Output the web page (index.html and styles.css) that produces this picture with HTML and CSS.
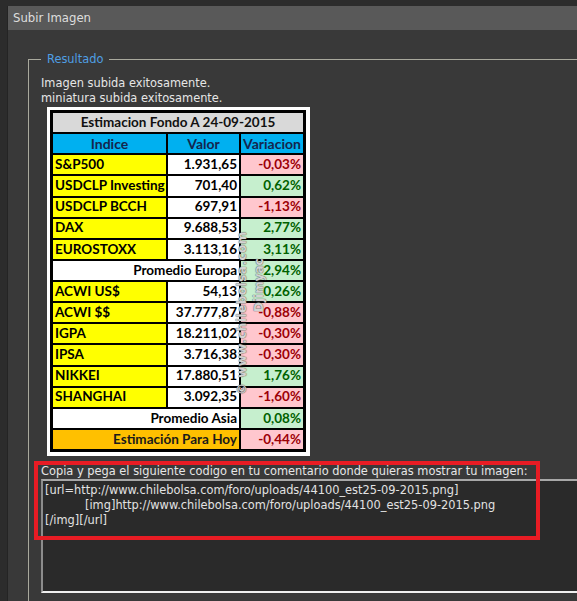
FILE: index.html
```html
<!DOCTYPE html>
<html lang="es">
<head>
<meta charset="utf-8">
<title>Subir Imagen</title>
<link rel="stylesheet" href="styles.css">
</head>
<body>
<div class="page">
  <div class="dialog">
    <div class="titlebar">Subir Imagen</div>
    <div class="dialog-body">
      <fieldset class="result">
        <legend>Resultado</legend>
        <div class="messages">
          <div>Imagen subida exitosamente.</div>
          <div>miniatura subida exitosamente.</div>
        </div>
        <div class="shot">
          <div class="sheet">
            <div class="c title span3">Estimacion Fondo A 24-09-2015</div>
            <div class="c head">Indice</div>
            <div class="c head">Valor</div>
            <div class="c head">Variacion</div>

            <div class="c name">S&amp;P500</div><div class="c val">1.931,65</div><div class="c neg">-0,03%</div>
            <div class="c name">USDCLP Investing</div><div class="c val">701,40</div><div class="c pos">0,62%</div>
            <div class="c name">USDCLP BCCH</div><div class="c val">697,91</div><div class="c neg">-1,13%</div>
            <div class="c name">DAX</div><div class="c val">9.688,53</div><div class="c pos">2,77%</div>
            <div class="c name">EUROSTOXX</div><div class="c val">3.113,16</div><div class="c pos">3,11%</div>
            <div class="c avg span2">Promedio Europa</div><div class="c pos">2,94%</div>
            <div class="c name">ACWI US$</div><div class="c val">54,13</div><div class="c pos">0,26%</div>
            <div class="c name">ACWI $$</div><div class="c val">37.777,87</div><div class="c neg">-0,88%</div>
            <div class="c name">IGPA</div><div class="c val">18.211,02</div><div class="c neg">-0,30%</div>
            <div class="c name">IPSA</div><div class="c val">3.716,38</div><div class="c neg">-0,30%</div>
            <div class="c name">NIKKEI</div><div class="c val">17.880,51</div><div class="c pos">1,76%</div>
            <div class="c name">SHANGHAI</div><div class="c val">3.092,35</div><div class="c neg">-1,60%</div>
            <div class="c avg span2">Promedio Asia</div><div class="c pos">0,08%</div>
            <div class="c total span2">Estimación Para Hoy</div><div class="c neg">-0,44%</div>

            <span class="wm wm1">© www.chilebolsa.com</span>
            <span class="wm wm2">Djimyac</span>
          </div>
        </div>
        <div class="copy-label">Copia y pega el siguiente codigo en tu comentario donde quieras mostrar tu imagen:</div>
        <div class="code">
          <div>[url=http://www.chilebolsa.com/foro/uploads/44100_est25-09-2015.png]</div>
          <div class="indent">[img]http://www.chilebolsa.com/foro/uploads/44100_est25-09-2015.png</div>
          <div>[/img][/url]</div>
        </div>
      </fieldset>
    </div>
  </div>
  <div class="highlight"></div>
</div>
</body>
</html>
```

FILE: styles.css
```css
html, body {
  margin: 0;
  padding: 0;
  background: #2c2c2c;
  overflow: hidden;
  height: 601px;
}

body {
  font-family: "DejaVu Sans", Verdana, sans-serif;
  font-size: 11.4px;
  color: #e4e4e4;
}

.page {
  position: relative;
  padding: 6px 0 0 7px;
}

.dialog {
  width: 620px;
  min-height: 600px;
  background: #393939;
  border-left: 1px solid #242424;
}

.titlebar {
  height: 24px;
  line-height: 24px;
  padding-left: 5px;
  background: #595959;
  color: #dedede;
  font-size: 11.7px;
}

.dialog-body {
  padding: 23px 0 0 20px;
}

.result {
  margin: 0;
  padding: 0 0 20px 12px;
  border: 1px solid #a9a99d;
  min-height: 560px;
  min-width: 0;
}

.result legend {
  padding: 0 6px;
  color: #4f9fe3;
  line-height: 13px;
}

.messages {
  margin-top: 10px;
  line-height: 15px;
  color: #e6e6e6;
}

.shot {
  display: inline-block;
  margin: 1px 0 0 6px;
  padding: 3px 4px 4px 3px;
  background: #ffffff;
  vertical-align: top;
}

.sheet {
  position: relative;
  display: grid;
  grid-template-columns: 113px 71px 62px;
  grid-template-rows: repeat(16, 1fr);
  gap: 2px;
  height: 342px;
  padding: 3px;
  box-sizing: border-box;
  background: #000;
  font-family: Lato, "Open Sans", sans-serif;
  font-weight: 700;
  font-size: 13.5px;
  overflow: hidden;
}

.c {
  display: flex;
  align-items: center;
  padding: 0 2px;
  white-space: nowrap;
  color: #000;
  background: #fff;
  line-height: 1;
}

.span3 { grid-column: span 3; }
.span2 { grid-column: span 2; }

.title {
  justify-content: center;
  background: #d9d9d9;
  color: #111;
}

.head {
  justify-content: center;
  background: #00b0f0;
  color: #14264d;
  font-size: 14px;
}

.name {
  background: #ffff00;
  color: #000;
}

.val {
  justify-content: flex-end;
}

.neg {
  justify-content: flex-end;
  background: #ffc7ce;
  color: #9c0006;
}

.pos {
  justify-content: flex-end;
  background: #c6efce;
  color: #006100;
}

.avg {
  justify-content: flex-end;
  background: #fff;
}

.total {
  justify-content: flex-end;
  background: #ffc000;
  color: #1a1a1a;
}

.wm {
  position: absolute;
  transform-origin: left top;
  transform: rotate(-90deg);
  white-space: nowrap;
  font-family: "DejaVu Sans", sans-serif;
  font-weight: 700;
  color: rgba(235, 235, 235, 0.85);
  text-shadow: 0 0 1px #555, 0 0 1px #555;
}

.wm1 {
  left: 185px;
  top: 285px;
  font-size: 12px;
  letter-spacing: 0.5px;
}

.wm2 {
  left: 202px;
  top: 202px;
  font-size: 12px;
}

.copy-label {
  margin-top: 8px;
  line-height: 15px;
  color: #e6e6e6;
}

.code {
  width: 560px;
  height: 106px;
  margin-left: 0;
  padding: 2px 2px;
  background: #2a2a2a;
  border-top: 2px solid #a8a8a8;
  border-left: 2px solid #8c8c8c;
  border-bottom: 2px solid #f0f0f0;
  border-right: 2px solid #f0f0f0;
  line-height: 15px;
  color: #e2e2e2;
  white-space: nowrap;
}

.code .indent {
  padding-left: 40px;
}

.highlight {
  position: absolute;
  left: 34px;
  top: 461px;
  width: 506px;
  height: 79px;
  box-sizing: border-box;
  border: 4px solid #e81c24;
  pointer-events: none;
}
```
